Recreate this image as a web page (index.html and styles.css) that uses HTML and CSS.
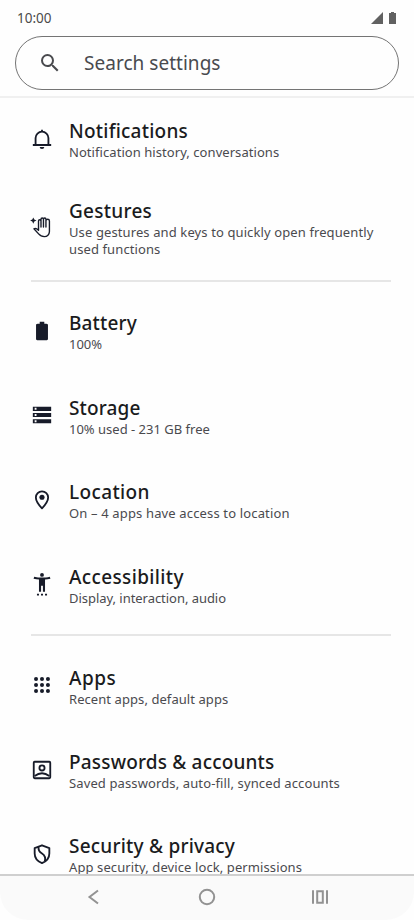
FILE: index.html
```html
<!DOCTYPE html>
<html lang="en">
<head>
<meta charset="utf-8">
<title>Settings</title>
<link rel="stylesheet" href="styles.css">
</head>
<body>
<div class="screen">
  <header class="status">
    <span class="clock">10:00</span>
    <svg class="status-icons" width="26" height="14" viewBox="0 0 26 14"><path d="M0 13 12 1v12z"/><path d="M18 2h2V1h3v1h2v11h-7z" stroke-linejoin="round"/></svg>
  </header>
  <div class="search">
    <svg width="24" height="24" viewBox="0 0 24 24"><path d="M15.500 14h-.79l-.28-.27A6.470 6.470 0 0 0 16 9.500 6.500 6.500 0 1 0 9.500 16c1.610 0 3.090-.59 4.230-1.570l.27.28v.79l5 4.990L20.490 19zm-6 0C7.010 14 5 11.990 5 9.500S7.010 5 9.500 5 14 7.010 14 9.500 11.990 14 9.500 14z"/></svg>
    <span class="placeholder">Search settings</span>
  </div>
  <main class="list">
    <section class="row first">
      <svg class="icon" viewBox="0 0 24 24"><path class="line" d="M2 18.500h20M5 18.500V11a7 7 0 0 1 14 0v7.500M12 2v2"/><path d="M9.500 20.800h5a2.500 2.200 0 0 1-5 0z"/></svg>
      <div><h2 class="t-not">Notifications</h2><p class="s-not">Notification history, conversations</p></div>
    </section>
    <section class="row second">
      <svg class="icon" viewBox="0 0 24 24"><path d="M2.500 1.500l1.100 2.400L6 5 3.600 6.100 2.500 8.500 1.400 6.100-1 5l2.400-1.100z"/><path class="thin" d="M8.200 15.500V5.500a1.350 1.350 0 0 1 2.700 0V12V3.500a1.350 1.350 0 0 1 2.700 0V12V3.500a1.350 1.350 0 0 1 2.700 0V12V5.500a1.700 1.700 0 0 1 3.800 0V17a5.500 5.500 0 0 1-5.500 5.500c-3.500 0-4.700-1-6.300-3L3.200 14q2-1.400 5 1.500z"/></svg>
      <div><h2 class="t-ges">Gestures</h2><p class="s-ges">Use gestures and keys to quickly open frequently<br>used functions</p></div>
    </section>
    <hr class="divider one">
    <section class="row">
      <svg class="icon" viewBox="0 0 24 24"><path d="M15.700 4H14.500V2h-5v2H8.300C7 4 5.500 4 5.500 5.200v15.500c0 .8.500 1.300 1.300 1.300h10.400c.8 0 1.300-.5 1.300-1.300V5.200C18.500 4 17 4 15.700 4z"/></svg>
      <div><h2 class="t-bat">Battery</h2><p>100%</p></div>
    </section>
    <section class="row">
      <svg class="icon" viewBox="0 0 24 24"><path fill-rule="evenodd" d="M2 21h20v-4.500H2zm2-3.200h2v2H4zM2 3v4.500h20V3zm4 3.200H4v-2h2zM2 14.300h20V9.800H2zM4 11h2v2H4z"/></svg>
      <div><h2 class="t-sto">Storage</h2><p>10% used - 231 GB free</p></div>
    </section>
    <section class="row">
      <svg class="icon" viewBox="0 0 24 24"><path class="line" d="M12 2.500a6.700 6.700 0 0 0-6.700 6.700c0 4 3.700 8.700 6.700 11.900 3-3.200 6.700-7.900 6.700-11.900A6.700 6.700 0 0 0 12 2.500z"/><circle cx="12" cy="9" r="2.800"/></svg>
      <div><h2 class="t-loc">Location</h2><p class="s-loc">On – 4 apps have access to location</p></div>
    </section>
    <section class="row">
      <svg class="icon" viewBox="0 0 24 24"><path d="M20.500 4c-2.600.7-5.700 1-8.500 1S6.100 4.700 3.500 4L2.800 6.200C4.900 6.700 7 7 8.700 7.200V20.500H11V14h2v6.500h2.300V7.200c1.700-.2 3.800-.5 5.900-1zM12 4.200a2.100 2.100 0 1 0 0-4.200 2.100 2.100 0 0 0 0 4.200zM6.500 24.500h2.200v-2H6.500zm4.400 0h2.200v-2h-2.200zm4.400 0h2.200v-2h-2.200z"/></svg>
      <div><h2 class="t-acc">Accessibility</h2><p class="s-acc">Display, interaction, audio</p></div>
    </section>
    <hr class="divider two">
    <section class="row">
      <svg class="icon" viewBox="0 0 24 24"><circle cx="5.500" cy="5.500" r="2.200"/><circle cx="12" cy="5.500" r="2.200"/><circle cx="18.500" cy="5.500" r="2.200"/><circle cx="5.500" cy="12" r="2.200"/><circle cx="12" cy="12" r="2.200"/><circle cx="18.500" cy="12" r="2.200"/><circle cx="5.500" cy="18.500" r="2.200"/><circle cx="12" cy="18.500" r="2.200"/><circle cx="18.500" cy="18.500" r="2.200"/></svg>
      <div><h2 class="t-app">Apps</h2><p class="s-app">Recent apps, default apps</p></div>
    </section>
    <section class="row">
      <svg class="icon" viewBox="0 0 24 24"><rect class="line" x="3" y="3" width="18" height="18" rx="1"/><circle class="line" cx="12" cy="9.700" r="2.800"/><path class="line" d="M4 18.500q8-6 16 0"/></svg>
      <div><h2 class="t-pas">Passwords &amp; accounts</h2><p class="s-pas">Saved passwords, auto-fill, synced accounts</p></div>
    </section>
    <section class="row">
      <svg class="icon" viewBox="0 0 24 24"><path class="line" d="M12 2.500 4 5.500v6c0 5 3.500 8.700 8 10.500 4.500-1.800 8-5.500 8-10.500v-6zM8.500 4C7.500 7.500 9 9.500 12 11.500S16 17 15 20"/></svg>
      <div><h2 class="t-sec">Security &amp; privacy</h2><p class="s-sec">App security, device lock, permissions</p></div>
    </section>
  </main>
  <nav class="nav">
    <svg width="20" height="20" viewBox="0 0 20 20"><path d="M14 3.500 5.500 10l8.500 6.500"/></svg>
    <svg width="20" height="20" viewBox="0 0 20 20"><circle cx="10" cy="10" r="7.200"/></svg>
    <svg width="20" height="20" viewBox="0 0 20 20"><path d="M3 3.200v13.600M17 3.200v13.600M7.200 4.200h5.600v11.600H7.200z"/></svg>
  </nav>
</div>
</body>
</html>
```
FILE: styles.css
```css
* { box-sizing: border-box; }
body { margin: 0; background: #fff; font-family: "Noto Sans", sans-serif; }
.screen { width: 414px; height: 920px; display: flex; flex-direction: column; overflow: hidden; background: #fefefe; }
.status { flex: none; height: 36px; padding: 0 17px; display: flex; justify-content: space-between; align-items: center; color: #4b4b4b; }
.clock { font-size: 13.5px; }
.status-icons { fill: #616161; }
.search { flex: none; height: 54px; margin: 0 15px 6px; border: 1px solid #747474; border-radius: 27px; display: flex; align-items: center; padding-left: 22px; color: #494a4e; }
.search svg { fill: #494a4e; }
.placeholder { margin-left: 22px; font-size: 19px; letter-spacing: .03px; }
.list { flex: 1; min-height: 0; overflow: hidden; border-top: 2px solid #f0f0f0; }
.row { height: 84.4px; padding: 20.4px 0 0 31px; display: flex; gap: 16px; white-space: nowrap; }
.row.first { height: 80px; }
.row.second { height: 99px; }
.icon { width: 22px; height: 22px; margin-top: 9.6px; flex: none; fill: #171b29; overflow: visible; }
.second .icon { margin-top: 17.6px; }
.line, .thin { fill: none; stroke: #171b29; stroke-width: 2; stroke-linejoin: round; }
.thin { stroke-width: 1.5; }
h2 { margin: 0; font-size: 19px; line-height: 26px; font-weight: 500; color: #1a1b20; }
p { margin: 0; font-size: 13px; line-height: 17px; color: #4a4a4e; }
.s-ges { line-height: 16.5px; }
.divider { height: 2px; border: 0; background: #e6e6e6; margin: 0 23px 0 31px; }
.one { margin-top: 3px; margin-bottom: 8px; }
.two { margin-top: 6.6px; margin-bottom: 8px; }
.t-not { letter-spacing: .23px; }
.t-ges { letter-spacing: .27px; }
.t-bat { letter-spacing: .15px; }
.t-sto { letter-spacing: .15px; }
.t-loc { letter-spacing: .36px; }
.t-acc { letter-spacing: .37px; }
.t-app { letter-spacing: .5px; }
.t-pas { letter-spacing: .18px; }
.t-sec { letter-spacing: .22px; }
.s-not { letter-spacing: .06px; }
.s-ges { letter-spacing: .11px; }
.s-loc { letter-spacing: .15px; }
.s-acc { letter-spacing: -.04px; }
.s-app { letter-spacing: .07px; }
.s-pas { letter-spacing: .12px; }
.s-sec { letter-spacing: .1px; }
.nav { flex: none; height: 46px; border-top: 2px solid #cfcfcf; border-radius: 0 0 28px 28px; background: #fafafa; display: flex; align-items: center; justify-content: space-between; padding: 0 84px 2px; }
.nav svg { fill: none; stroke: #929292; stroke-width: 2; }
```
